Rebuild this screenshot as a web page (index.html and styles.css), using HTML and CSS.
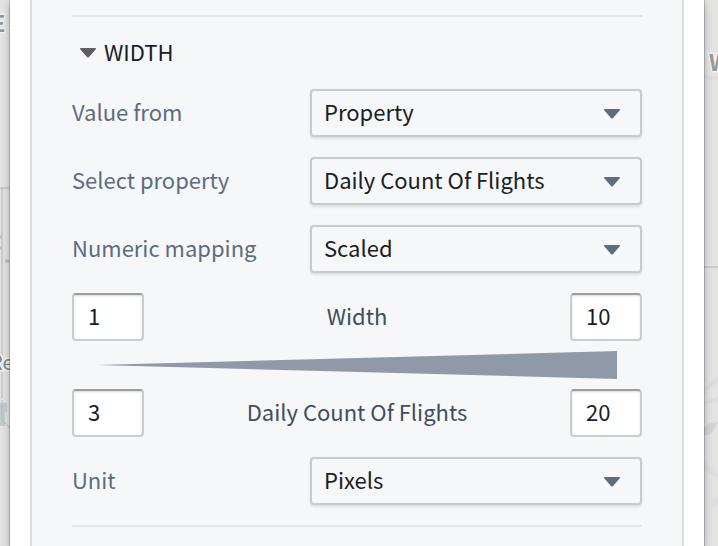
FILE: index.html
```html
<!DOCTYPE html>
<html lang="en">
<head>
    <meta charset="UTF-8">
    <meta name="viewport" content="width=device-width, initial-scale=1.0">
    <title>Layer style</title>
    <link rel="stylesheet" href="styles.css">
</head>
<body>
    <svg class="map map-left" aria-hidden="true">
        <path d="M0 188h10M2 188v210" stroke="#b4b5b5" fill="none"/>
        <path d="M0 237h2M0 248h2M5 261h4" stroke="#b3bfc1" stroke-width="3"/>
        <path d="M0 403h7v9h-2v14h-5z" fill="#c3cccd"/>
        <path d="M2 400v20l8 8" stroke="#b4bbbc" fill="none"/>
        <text class="map-state" x="-8 8" y="32">E.</text>
        <text class="map-city" x="-10" y="370">Re</text>
    </svg>
    <div class="card">
        <form class="panel">
            <section class="group">
                <h2><svg class="caret" viewBox="0 0 16 10" aria-hidden="true"><path d="M1 0h14q1 0 1 1l-7 8q-1 1-2 0l-7-8q0-1 1-1z"/></svg><span>WIDTH</span></h2>
                <div class="row">
                    <label for="source">Value from</label>
                    <div class="select">
                        <select id="source"><option>Property</option></select>
                        <svg class="caret" viewBox="0 0 16 10" aria-hidden="true"><path d="M1 0h14q1 0 1 1l-7 8q-1 1-2 0l-7-8q0-1 1-1z"/></svg>
                    </div>
                </div>
                <div class="row">
                    <label for="property">Select property</label>
                    <div class="select">
                        <select id="property"><option>Daily Count Of Flights</option></select>
                        <svg class="caret" viewBox="0 0 16 10" aria-hidden="true"><path d="M1 0h14q1 0 1 1l-7 8q-1 1-2 0l-7-8q0-1 1-1z"/></svg>
                    </div>
                </div>
                <div class="row">
                    <label for="mapping">Numeric mapping</label>
                    <div class="select">
                        <select id="mapping"><option>Scaled</option></select>
                        <svg class="caret" viewBox="0 0 16 10" aria-hidden="true"><path d="M1 0h14q1 0 1 1l-7 8q-1 1-2 0l-7-8q0-1 1-1z"/></svg>
                    </div>
                </div>
                <div class="scale">
                    <div class="row range">
                        <input type="text" value="1" aria-label="Minimum width">
                        <span>Width</span>
                        <input type="text" value="10" aria-label="Maximum width">
                    </div>
                    <svg class="ramp" viewBox="0 0 520 28" preserveAspectRatio="none" aria-hidden="true"><path d="M0 14L520 0v28z"/></svg>
                    <div class="row range">
                        <input type="text" value="3" aria-label="Minimum daily count of flights">
                        <span>Daily Count Of Flights</span>
                        <input type="text" value="20" aria-label="Maximum daily count of flights">
                    </div>
                </div>
                <div class="row">
                    <label for="unit">Unit</label>
                    <div class="select">
                        <select id="unit"><option>Pixels</option></select>
                        <svg class="caret" viewBox="0 0 16 10" aria-hidden="true"><path d="M1 0h14q1 0 1 1l-7 8q-1 1-2 0l-7-8q0-1 1-1z"/></svg>
                    </div>
                </div>
            </section>
        </form>
    </div>
    <svg class="map map-right" aria-hidden="true">
        <path d="M0 74q8 4 14 1v5q-8 1-14-2z" fill="#dcdddc"/>
        <path d="M0 267h14" stroke="#b4b5b5"/>
        <path d="M0 388l14-12v5L0 394zM0 402l14-6v6l-14 2z" fill="#dcdddc"/>
        <path d="M0 428l4-4 10-2-8 13H0z" fill="#d2d3d2"/>
        <path d="M0 462q8 4 14 12v4L0 471zM8 500l6-4v8l-6 3z" fill="#dcdddc"/>
        <text class="map-state" x="5" y="71">W</text>
    </svg>
</body>
</html>
```

FILE: styles.css
```css
* { box-sizing: border-box; }
body {
    display: flex;
    min-height: 100vh;
    margin: 0;
    background: #e3e3e2;
    color: #182026;
    font-family: "Noto Sans CJK SC", "Noto Sans", sans-serif;
    font-size: 22px;
    line-height: 32px;
}

.map { flex: none; height: 546px; }
.map-left { width: 10px; }
.map-right { width: 14px; }
.map text { stroke: #f2f2f2; stroke-width: 3px; paint-order: stroke; }
.map-state { fill: #969797; font-size: 22px; font-weight: bold; }
.map-city { fill: #838484; font-size: 20px; }

.card {
    position: relative;
    flex: 1;
    display: flex;
    padding: 0 20px;
    background: #fff;
    box-shadow: 0 0 0 1px rgba(16, 22, 26, 0.2), 0 4px 8px rgba(16, 22, 26, 0.3);
}
.panel {
    flex: 1;
    padding: 15px 40px 0;
    border: solid #dadcde;
    border-width: 0 2px;
    background: #f5f7f9;
}
.group {
    padding-bottom: 20px;
    border: solid #e3e6e9;
    border-width: 2px 0;
}
h2 {
    display: flex;
    align-items: center;
    gap: 8px;
    height: 32px;
    margin: 20px 8px;
    font-size: 22px;
    font-weight: normal;
}
.caret { width: 16px; height: 10px; fill: #5c6063; }

.row { display: flex; align-items: center; justify-content: space-between; }
.row + .row, .scale, .scale + .row { margin-top: 20px; }
label { color: #5f6b80; }
h2 span, label, .range span { padding-bottom: 4px; }
.select { position: relative; width: 332px; }
.select .caret {
    position: absolute;
    top: 20px;
    right: 22px;
    fill: #5f6b80;
    pointer-events: none;
}
select {
    display: block;
    appearance: none;
    width: 100%;
    height: 48px;
    padding: 0 48px 4px 12px;
    border: 2px solid #c7c9cb;
    border-radius: 4px;
    background: #f5f7f9;
    box-shadow: 0 2px 3px rgba(16, 22, 26, 0.1);
    color: inherit;
    font: inherit;
}
input {
    width: 72px;
    height: 48px;
    padding: 0 14px 4px;
    border: 2px solid #cacccd;
    border-top-color: #9b9d9f;
    border-radius: 4px;
    background: #fff;
    box-shadow: inset 0 1px 2px rgba(16, 22, 26, 0.15);
    color: inherit;
    font: inherit;
}
.range { color: #424d59; }
.range input { color: #182026; }
.ramp {
    display: block;
    width: calc(100% - 50px);
    height: 28px;
    margin: 10px 25px;
    fill: #9099a8;
}
```
